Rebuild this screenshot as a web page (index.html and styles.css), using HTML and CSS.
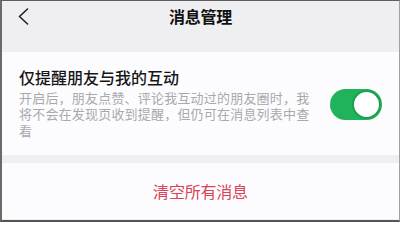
FILE: index.html
```html
<!DOCTYPE html>
<html lang="zh-CN">
<head>
<meta charset="utf-8">
<link rel="stylesheet" href="styles.css">
</head>
<body>
<div class="frame">
  <div class="header">
    <div class="nav">
      <svg class="back" width="11" height="17" viewBox="0 0 11 17"><polyline points="9.5,1 1.5,8.5 9.5,16" fill="none" stroke="#222" stroke-width="1.6" stroke-linecap="round" stroke-linejoin="round"/></svg>
      <div class="title">消息管理</div>
    </div>
  </div>
  <div class="card">
    <div class="text">
      <div class="item-title">仅提醒朋友与我的互动</div>
      <div class="desc">开启后，朋友点赞、评论我互动过的朋友圈时，我将不会在发现页收到提醒，但仍可在消息列表中查看</div>
    </div>
    <div class="toggle"><div class="knob"></div></div>
  </div>
  <div class="gap"></div>
  <div class="action">清空所有消息</div>
</div>
</body>
</html>
```

FILE: styles.css
```css
html, body {
  margin: 0;
  padding: 0;
}
body {
  font-family: "Noto Sans CJK SC", "Noto Sans", sans-serif;
}
.frame {
  width: 400px;
  height: 222px;
  box-sizing: border-box;
  border-top: 1px solid #5c5c5c;
  border-left: 2px solid #6a6a6a;
  border-right: 1px solid #a0a0a0;
  border-bottom: 2px solid #555;
  background: #f0f0f2;
  display: flex;
  flex-direction: column;
  overflow: hidden;
}
.header {
  height: 51px;
  background: #efeff1;
}
.nav {
  height: 29px;
  display: flex;
  align-items: center;
  justify-content: center;
  position: relative;
}
.back {
  position: absolute;
  left: 16px;
  top: 7px;
}
.title {
  font-size: 16px;
  font-weight: 700;
  color: #111;
  letter-spacing: -0.2px;
}
.card {
  height: 103px;
  background: #fcfcfe;
  display: flex;
  align-items: center;
  justify-content: space-between;
  padding: 0 17px 0 17px;
}
.text {
  width: 296px;
  margin-top: -2px;
}
.item-title {
  font-size: 16px;
  line-height: 22px;
  color: #161616;
  font-weight: 500;
}
.desc {
  margin-top: 2px;
  font-size: 13px;
  line-height: 16.5px;
  letter-spacing: 0.2px;
  color: #a9a9ab;
}
.toggle {
  width: 52px;
  height: 31px;
  border-radius: 16px;
  background: #20b35b;
  display: flex;
  align-items: center;
  justify-content: flex-end;
  padding-right: 1px;
  box-sizing: border-box;
  margin-top: 1px;
}
.knob {
  width: 25px;
  height: 25px;
  border-radius: 50%;
  background: #fff;
  border: 2px solid #1e9f50;
}
.gap {
  height: 8px;
  background: #efeff1;
}
.action {
  height: 56px;
  background: #fcfcfe;
  display: flex;
  align-items: center;
  justify-content: center;
  font-size: 16px;
  color: #d84457;
  letter-spacing: -0.2px;
}
```
